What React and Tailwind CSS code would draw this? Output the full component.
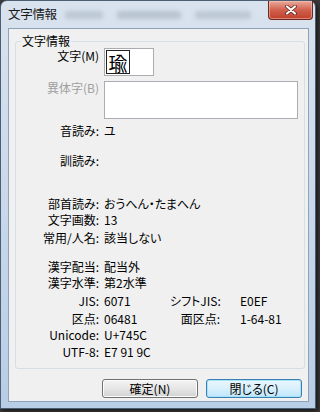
import React from "react";

const F = { fontFamily: '"Noto Sans CJK JP", "Noto Sans", sans-serif' };

function Row({ label, value, label2, value2, mt, gray }) {
  return (
    <div className={`flex h-[14px] leading-[14px] ${mt}`}>
      <div className={`w-[83px] text-right ${gray ? "text-[#9a9a9a]" : ""}`}>{label}</div>
      <div className="ml-[5px] w-[66px] whitespace-nowrap">{value}</div>
      {label2 ? <div className="w-[50px] text-right whitespace-nowrap">{label2}</div> : null}
      {value2 ? <div className="ml-[20px] whitespace-nowrap">{value2}</div> : null}
    </div>
  );
}

export default function App() {
  return (
    <div
      className="w-[320px] h-[412px] overflow-hidden bg-[#3a3a3a] text-[12px] text-[#000] [font-feature-settings:'palt']"
      style={F}
    >
      <div className="w-[316px] h-[409px] rounded-t-[7px] border border-[#4b5e74] bg-gradient-to-b from-[#d9e3ee] via-[#c9d8ea] to-[#b8cde6] shadow-[2px_2px_4px_rgba(0,0,0,0.6)] flex flex-col">
        {/* title bar */}
        <div className="h-[27px] flex items-start">
          <div className="ml-[7px] h-[27px] flex items-center pb-[1px] text-[12.5px] text-[#1a1a1a] tracking-[-0.3px]">文字情報</div>
          <div className="flex items-center h-[27px] gap-[14px] ml-[8px]">
            <div className="w-[38px] h-[8px] rounded-[3px] bg-[#bcc7d3] blur-[2px]" />
            <div className="w-[64px] h-[8px] rounded-[3px] bg-[#b8c3cf] blur-[2px]" />
            <div className="w-[56px] h-[8px] rounded-[3px] bg-[#bcc7d3] blur-[2px]" />
          </div>
          <div className="ml-auto mr-[2px] w-[45px] h-[19px] rounded-b-[4px] border border-t-0 border-[#6a2a22] bg-gradient-to-b from-[#e9aa9c] via-[#d0604c] to-[#c0402c] flex items-center justify-center shadow-[inset_0_0_0_1px_rgba(255,200,190,0.5)]">
            <svg width="12" height="10" viewBox="0 0 12 10">
              <path d="M2 1.5 L10 8.5 M10 1.5 L2 8.5" stroke="#5a1c14" strokeWidth="3.6" strokeLinecap="round" />
              <path d="M2 1.5 L10 8.5 M10 1.5 L2 8.5" stroke="#ffffff" strokeWidth="2.2" strokeLinecap="round" />
            </svg>
          </div>
        </div>
        {/* client */}
        <div className="ml-[7px] w-[301px] h-[374px] border border-[#8ea2b9] bg-[#f0f0f0] flex flex-col">
          <div className="ml-[6px] mt-[12px] w-[290px] h-[328px] border border-[#d5dfe5] rounded-[3px] flex flex-col">
            <div className="ml-[5px] -mt-[8px] w-fit px-[1px] bg-[#f0f0f0] leading-[14px] text-[12px]">文字情報</div>
            {/* 文字 */}
            <div className="flex">
              <div className="w-[83px] text-right leading-[16px]">文字(M)</div>
              <div className="ml-[5px] w-[50px] h-[28px] border border-[#abadb3] bg-white p-[1px]">
                <div className="w-[24px] h-[24px] border border-[#222] flex items-center justify-center text-[19px] leading-none">瑜</div>
              </div>
            </div>
            {/* 異体字 */}
            <div className="flex mt-[5px]">
              <div className="w-[83px] text-right leading-[14px] text-[#a0a0a0]">異体字(B)</div>
              <div className="ml-[5px] w-[194px] h-[38px] border border-[#abadb3] bg-white" />
            </div>
            <Row mt="mt-[5px]" label="音読み:" value="ユ" />
            <Row mt="mt-[16px]" label="訓読み:" value="" />
            <Row mt="mt-[29px]" label="部首読み:" value="おうへん・たまへん" />
            <Row mt="mt-[2px]" label="文字画数:" value="13" />
            <Row mt="mt-[4px]" label="常用/人名:" value="該当しない" />
            <Row mt="mt-[15px]" label="漢字配当:" value="配当外" />
            <Row mt="mt-[2px]" label="漢字水準:" value="第2水準" />
            <Row mt="mt-[4px]" label="JIS:" value="6071" label2="シフトJIS:" value2="E0EF" />
            <Row mt="mt-[4px]" label="区点:" value="06481" label2="面区点:" value2="1-64-81" />
            <Row mt="mt-[2px]" label="Unicode:" value="U+745C" />
            <Row mt="mt-[3px]" label="UTF-8:" value="E7 91 9C" />
          </div>
          <div className="flex justify-end gap-[8px] mr-[6px] mt-[10px]">
            <div className="w-[96px] h-[19px] rounded-[3px] border border-[#707070] bg-gradient-to-b from-[#f3f3f3] via-[#e6e6e6] to-[#d2d2d2] flex items-center justify-center leading-none shadow-[inset_0_0_0_1px_#fcfcfc]">確定(N)</div>
            <div className="w-[96px] h-[19px] rounded-[3px] border border-[#3c7fb1] bg-gradient-to-b from-[#eaf6fd] via-[#d9f0fc] to-[#bee6fd] flex items-center justify-center leading-none shadow-[inset_0_0_0_1px_#a6e2f8]">閉じる(C)</div>
          </div>
        </div>
      </div>
    </div>
  );
}
